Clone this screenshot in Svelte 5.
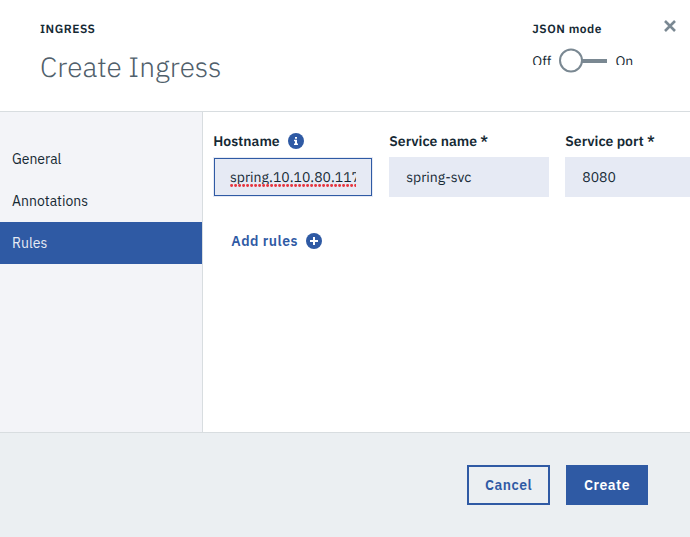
<script>
  const tabs = ['General', 'Annotations', 'Rules'];
  let active = $state('Rules');
</script>

<div class="modal">
  <header>
    <div class="heading">
      <div class="label">INGRESS</div>
      <h1>Create Ingress</h1>
    </div>
    <div class="mode">
      <div class="mode-label">JSON mode</div>
      <div class="toggle">
        <span class="off">Off</span>
        <svg width="48" height="25" viewBox="0 0 48 25">
          <path d="M23 13H48" stroke="#7a8892" stroke-width="4" />
          <circle cx="12" cy="12.5" r="11" fill="#fff" stroke="#7a8892" stroke-width="2" />
        </svg>
        <span class="on">On</span>
      </div>
    </div>
    <svg class="close" width="12" height="12" viewBox="0 0 12 12">
      <path d="M1 1L11 11M11 1L1 11" stroke="#7a8892" stroke-width="2.6" />
    </svg>
  </header>

  <main>
    <nav>
      {#each tabs as tab}
        <button class="tab" class:active={active === tab} onclick={() => (active = tab)}>{tab}</button>
      {/each}
    </nav>
    <section>
      <div class="fields">
        <div class="field">
          <div class="field-label">
            <span>Hostname</span>
            <svg width="16" height="16" viewBox="0 0 16 16">
              <circle cx="8" cy="8" r="8" fill="#2f5aa4" />
              <path d="M7 4h2v1.8H7zM6 6.8h3v3.6h1V12H6v-1.6h1V8.2H6z" fill="#fff" />
            </svg>
          </div>
          <div class="input focused">
            <div class="clip"><span class="host">spring.10.10.80.117</span>
              <svg class="squiggle" width="126" height="3" viewBox="0 0 126 3">
                <path d="M1.5 1.5H126" stroke="#e6363f" stroke-width="2.8" stroke-linecap="round" stroke-dasharray="0.2 3.8" />
              </svg>
            </div>
          </div>
        </div>
        <div class="field">
          <div class="field-label"><span>Service name *</span></div>
          <div class="input"><span>spring-svc</span></div>
        </div>
        <div class="field">
          <div class="field-label"><span>Service port *</span></div>
          <div class="input"><span>8080</span></div>
        </div>
      </div>
      <button class="add">
        <span>Add rules</span>
        <svg width="16" height="16" viewBox="0 0 16 16">
          <circle cx="8" cy="8" r="8" fill="#2f5aa4" />
          <path d="M8 4V12M4 8H12" stroke="#fff" stroke-width="2" />
        </svg>
      </button>
    </section>
  </main>

  <footer>
    <button class="btn cancel"><span>Cancel</span></button>
    <button class="btn create"><span>Create</span></button>
  </footer>
</div>

<style>
  :global(body) { margin: 0; overflow: hidden; }
  * { box-sizing: border-box; }
  .modal {
    width: 690px; height: 537px; overflow: hidden; display: flex; flex-direction: column;
    font-family: 'IBM Plex Sans', Roboto, 'Liberation Sans', sans-serif;
    font-size: 14px; color: #152934; background: #fff;
    text-rendering: geometricPrecision;
  }
  button { font: inherit; border: 0; background: none; padding: 0; margin: 0; text-align: left; color: inherit; }
  svg { display: block; flex: none; }
  span { white-space: nowrap; }
  header { height: 112px; flex: none; display: flex; border-bottom: 1px solid #d8dde0; padding-left: 40px; }
  .heading { width: 492px; padding-top: 20px; }
  .label { font-size: 12px; line-height: 20px; font-weight: 600; letter-spacing: 0.5px; }
  h1 { margin: 7px 0 0; font-size: 28px; line-height: 40px; font-weight: 300; color: #50606b; letter-spacing: 0; }
  .mode { width: 132px; padding-top: 20px; }
  .mode-label { font-size: 12px; line-height: 20px; font-weight: 600; letter-spacing: 0.5px; padding-left: 0.3px; }
  .toggle { display: flex; margin-top: 8px; }
  .toggle span { height: 17px; line-height: 26px; overflow: hidden; }
  .off { width: 27px; padding-left: 0.3px; }
  .on { margin-left: 8px; padding-left: 0.4px; }
  .close { margin-top: 20px; }
  main { height: 320px; flex: none; display: flex; }
  nav { width: 203px; flex: none; padding-top: 26px; background: #f3f4f8; border-right: 1px solid #d8dde0; }
  .tab { display: block; width: 100%; height: 42px; padding-left: 12px; line-height: 42px; }
  .tab.active { background: #2f5aa4; color: #e7ebf4; width: 202px; }
  section { flex: 1; min-width: 0; overflow: hidden; padding: 20px 0 0 10px; }
  .fields { display: flex; gap: 16px; }
  .field { width: 160px; flex: none; }
  .field-label { height: 18px; display: flex; align-items: center; gap: 8.5px; font-weight: 600; margin-bottom: 7px; padding-left: 0.3px; }
  .input { height: 40px; background: #e6eaf4; padding-left: 17.3px; line-height: 40px; }
  .focused { padding: 0; border: 1px solid #e6eaf4; }
  .focused .clip { line-height: 36px; border: 1px solid #2f5aa4; height: 38px; width: 158px; padding: 0 15px; }
  .host { display: block; height: 25px; width: 126px; overflow: hidden; }
  .add { display: flex; align-items: center; gap: 8px; height: 40px; margin: 24px 0 0 18.3px; color: #2f5aa4; font-weight: 600; letter-spacing: 0.5px; }
  footer { flex: 1; display: flex; gap: 16px; justify-content: flex-end; background: #ebeff2; border-top: 1px solid #d8dde0; padding: 32px 42px 0 0; }
  .btn { height: 40px; border: 2px solid #2f5aa4; padding-left: 16px; color: #2f5aa4; font-weight: 600; letter-spacing: 0.5px; }
  .cancel { width: 83px; }
  .create { width: 82px; background: #2f5aa4; color: #fff; }
</style>
